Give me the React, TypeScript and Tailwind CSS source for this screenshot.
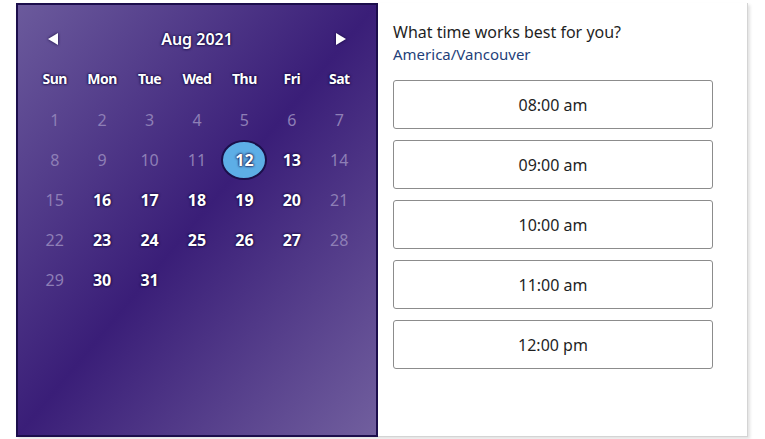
import React from 'react';

const weekdays = ['Sun', 'Mon', 'Tue', 'Wed', 'Thu', 'Fri', 'Sat'];
const available = [12, 13, 16, 17, 18, 19, 20, 23, 24, 25, 26, 27, 30, 31];
const slots = ['08:00 am', '09:00 am', '10:00 am', '11:00 am', '12:00 pm'];

const glow = '[text-shadow:0_0_2px_#10063a,0_0_3px_#10063a]';

function Arrow({ dir }: { dir: 'left' | 'right' }) {
  return (
    <svg width="12" height="14" viewBox="0 0 12 14" className="drop-shadow-[0_0_1.5px_#10063a]">
      {dir === 'left' ? (
        <polygon points="11,1 11,13 1,7" fill="#fff" />
      ) : (
        <polygon points="1,1 1,13 11,7" fill="#fff" />
      )}
    </svg>
  );
}

export default function App() {
  const days = Array.from({ length: 31 }, (_, i) => i + 1);

  return (
    <div className="min-h-[439px] w-[765px] bg-white pl-4 pt-[3px] font-['Noto_Sans',sans-serif]">
      <div className="flex h-[434px] w-[732px] shadow-[2px_2px_3px_rgba(0,0,0,0.12)]">
        {/* calendar */}
        <div className="w-[362px] border-2 border-[#1c0e4c] bg-[linear-gradient(to_bottom_right,#6b5a9c_0%,#3a1e78_50%,#715f9e_100%)] px-[13px] pt-[18px]">
          <div className="flex h-8 items-center justify-between px-4">
            <Arrow dir="left" />
            <span className={`text-[16px] font-semibold text-white ${glow}`}>Aug 2021</span>
            <Arrow dir="right" />
          </div>
          <div className="mt-[7px] grid grid-cols-7">
            {weekdays.map((d) => (
              <div key={d} className={`flex h-8 items-center justify-center text-[14px] font-bold tracking-[-0.5px] text-white ${glow}`}>
                {d}
              </div>
            ))}
          </div>
          <div className="mt-[6px] grid grid-cols-7">
            {days.map((d) => {
              const on = available.includes(d);
              const sel = d === 12;
              return (
                <div key={d} className="flex h-10 items-center justify-center">
                  {sel ? (
                    <span className={`flex h-[40px] w-[46px] items-center justify-center rounded-[50%] border-2 border-[#1b0f4a] bg-[#5daee6] text-[16px] font-bold text-white ${glow}`}>
                      {d}
                    </span>
                  ) : on ? (
                    <span className={`text-[16px] font-bold text-white ${glow}`}>{d}</span>
                  ) : (
                    <span className="text-[16px] text-[#8e7fb6]">{d}</span>
                  )}
                </div>
              );
            })}
          </div>
        </div>

        {/* times */}
        <div className="flex-1 border-r border-b border-[#d4d4d4] bg-white pl-[15px] pt-[17px]">
          <p className="text-[16px] leading-6 text-[#1f1f1f]">What time works best for you?</p>
          <p className="text-[15px] leading-5 text-[#1f3f7a]">America/Vancouver</p>
          <div className="mt-4 flex flex-col gap-[11px]">
            {slots.map((s) => (
              <button
                key={s}
                className="flex h-[49px] w-[320px] items-center justify-center rounded-[3px] border border-[#8c8c8c] bg-white text-[16px] text-[#1f1f1f]"
              >
                {s}
              </button>
            ))}
          </div>
        </div>
      </div>
    </div>
  );
}
